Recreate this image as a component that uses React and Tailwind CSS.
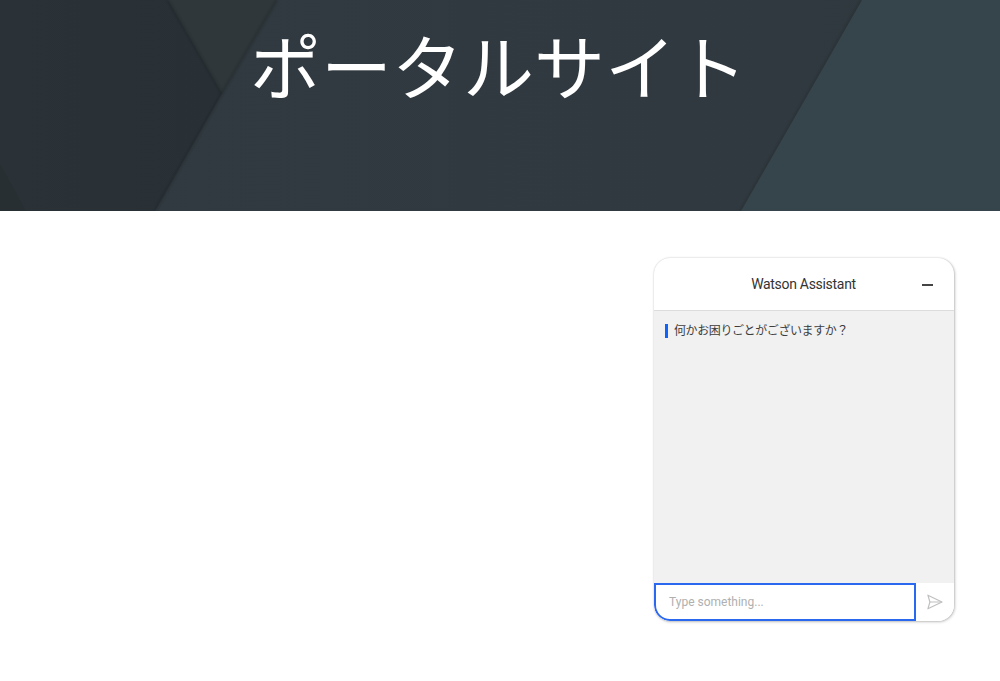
const HeroBackground = () => (
  <svg
    className="absolute inset-0 h-full w-full"
    viewBox="0 0 1000 210"
    preserveAspectRatio="none"
    aria-hidden="true"
  >
    <defs>
      <linearGradient id="edgeShade" x1="0" y1="0" x2="1" y2="0">
        <stop offset="0" stopColor="#2a3237" />
        <stop offset="1" stopColor="#283035" />
      </linearGradient>
      <linearGradient id="mainShade" x1="0" y1="0" x2="1" y2="0">
        <stop offset="0" stopColor="#303a40" />
        <stop offset="0.8" stopColor="#30393f" />
        <stop offset="1" stopColor="#2e373c" />
      </linearGradient>
      <filter id="softEdge" x="-10%" y="-10%" width="120%" height="120%">
        <feGaussianBlur stdDeviation="1.5" />
      </filter>
    </defs>
    <rect width="1000" height="210" fill="url(#mainShade)" />
    <polygon points="168,0 277,0 222,93" fill="#2f373a" />
    <polygon points="0,0 168,0 222,93 155,210 0,210" fill="url(#edgeShade)" />
    <polygon points="0,163 26,210 0,210" fill="#282f32" />
    <g stroke="#000000" strokeOpacity="0.16" strokeWidth="2.5" fill="none" filter="url(#softEdge)">
      <path d="M168 0 222 93 155 210" />
      <path d="M277 0 222 93" />
      <path d="M862 0 741 210" />
    </g>
    <polygon points="862,0 1000,0 1000,210 741,210" fill="#36444b" />
  </svg>
);

const SendIcon = () => (
  <svg width="16" height="16" viewBox="0 0 16 16" fill="none" stroke="#c0c0c0" strokeWidth="1.2" aria-hidden="true">
    <path d="M0.9 1.2 15 8 0.9 14.8 2.9 8Z" strokeLinejoin="round" />
    <path d="M2.9 8H15" />
  </svg>
);

const ChatCard = () => {
  return (
    <div className="flex h-[363px] w-[300px] flex-col overflow-hidden rounded-2xl bg-white shadow-[0_0_2px_rgba(0,0,0,0.18),1px_1px_3px_rgba(0,0,0,0.22)]">
      <div className="relative flex h-[53px] shrink-0 items-center justify-center border-b border-[#dcdcdc] pr-[1px]">
        <span className="text-sm tracking-[-0.3px] text-[#333333] font-['Roboto','Noto_Sans',sans-serif]">Watson Assistant</span>
        <span className="absolute right-[21px] top-[26px] h-[1.5px] w-[11px] bg-[#444444]" />
      </div>

      <div className="flex-1 bg-[#f1f1f1] pl-[11px] pt-[13px]">
        <div className="flex items-center gap-[6px]">
          <span className="h-[14px] w-[3px] bg-[#0f62fe]" />
          <p className="text-xs leading-[14px] tracking-[-0.4px] text-[#3d3d3d]">何かお困りごとがございますか？</p>
        </div>
      </div>

      <div className="flex h-[38px] shrink-0 bg-white">
        <div className="flex w-[262px] items-center rounded-bl-2xl border-2 border-[#2a68f0] pl-[13px] text-xs text-[#b0b0b0] font-['Roboto','Noto_Sans',sans-serif]">
          Type something...
        </div>
        <div className="flex flex-1 items-center justify-center">
          <SendIcon />
        </div>
      </div>
    </div>
  );
};

const App = () => {
  return (
    <div className="min-h-[681px] bg-white font-['Noto_Sans','Noto_Sans_CJK_JP',sans-serif]">
      <header className="relative flex h-[211px] justify-center overflow-hidden pr-[3px] pt-[18px]">
        <HeroBackground />
        <h1 className="relative text-[71px] leading-[90px] font-normal text-white font-['Noto_Sans_CJK_JP',sans-serif]">
          ポータルサイト
        </h1>
      </header>
      <main className="flex justify-end pr-[46px] pt-[47px]">
        <ChatCard />
      </main>
    </div>
  );
};

export default App;
